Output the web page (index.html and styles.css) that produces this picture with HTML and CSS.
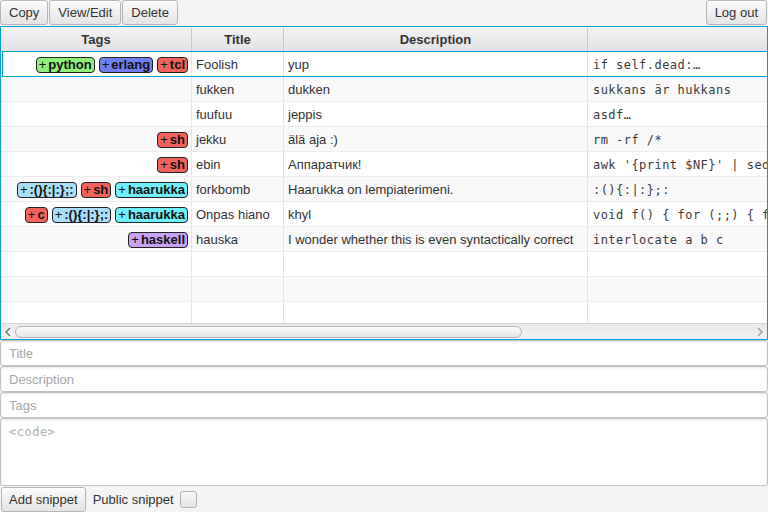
FILE: index.html
```html
<!DOCTYPE html>
<html>
<head>
<meta charset="utf-8">
<link rel="stylesheet" href="styles.css">
</head>
<body>
<div class="toolbar">
  <button class="btn">Copy</button>
  <button class="btn">View/Edit</button>
  <button class="btn">Delete</button>
  <div class="spacer"></div>
  <button class="btn">Log out</button>
</div>
<div class="table">
  <div class="viewport">
    <div class="grid">
      <div class="hrow">
        <div class="hc c1">Tags</div>
        <div class="hc c2">Title</div>
        <div class="hc c3">Description</div>
        <div class="hc c4"></div>
      </div>
      <div class="row sel">
        <div class="cell c1 tags"><span class="tag g">+<b>python</b></span><span class="tag bl">+<b>erlang</b></span><span class="tag r">+<b>tcl</b></span></div>
        <div class="cell c2">Foolish</div>
        <div class="cell c3">yup</div>
        <div class="cell c4 code">if self.dead:…</div>
      </div>
      <div class="row alt">
        <div class="cell c1 tags"></div>
        <div class="cell c2">fukken</div>
        <div class="cell c3">dukken</div>
        <div class="cell c4 code">sukkans är hukkans</div>
      </div>
      <div class="row">
        <div class="cell c1 tags"></div>
        <div class="cell c2">fuufuu</div>
        <div class="cell c3">jeppis</div>
        <div class="cell c4 code">asdf…</div>
      </div>
      <div class="row alt">
        <div class="cell c1 tags"><span class="tag r">+<b>sh</b></span></div>
        <div class="cell c2">jekku</div>
        <div class="cell c3">älä aja :)</div>
        <div class="cell c4 code">rm -rf /*</div>
      </div>
      <div class="row">
        <div class="cell c1 tags"><span class="tag r">+<b>sh</b></span></div>
        <div class="cell c2">ebin</div>
        <div class="cell c3">Аппаратчик!</div>
        <div class="cell c4 code">awk '{print $NF}' | sed 's/x/y/'</div>
      </div>
      <div class="row alt">
        <div class="cell c1 tags"><span class="tag lb">+<b>:(){:|:};:</b></span><span class="tag r">+<b>sh</b></span><span class="tag cy">+<b>haarukka</b></span></div>
        <div class="cell c2">forkbomb</div>
        <div class="cell c3">Haarukka on lempiaterimeni.</div>
        <div class="cell c4 code">:(){:|:};:</div>
      </div>
      <div class="row">
        <div class="cell c1 tags"><span class="tag r">+<b>c</b></span><span class="tag lb">+<b>:(){:|:};:</b></span><span class="tag cy">+<b>haarukka</b></span></div>
        <div class="cell c2">Onpas hiano</div>
        <div class="cell c3">khyl</div>
        <div class="cell c4 code">void f() { for (;;) { fork(); } }</div>
      </div>
      <div class="row alt">
        <div class="cell c1 tags"><span class="tag li">+<b>haskell</b></span></div>
        <div class="cell c2">hauska</div>
        <div class="cell c3">I wonder whether this is even syntactically correct</div>
        <div class="cell c4 code">interlocate a b c</div>
      </div>
      <div class="row">
        <div class="cell c1"></div><div class="cell c2"></div><div class="cell c3"></div><div class="cell c4"></div>
      </div>
      <div class="row alt">
        <div class="cell c1"></div><div class="cell c2"></div><div class="cell c3"></div><div class="cell c4"></div>
      </div>
      <div class="row">
        <div class="cell c1"></div><div class="cell c2"></div><div class="cell c3"></div><div class="cell c4"></div>
      </div>
    </div>
  </div>
  <div class="hscroll">
    <div class="arrow"><svg width="8" height="10" viewBox="0 0 8 10"><path d="M6 1 L2 5 L6 9" fill="none" stroke="#6e6e6e" stroke-width="1.3"/></svg></div>
    <div class="track"><div class="thumb"></div></div>
    <div class="arrow"><svg width="8" height="10" viewBox="0 0 8 10"><path d="M2 1 L6 5 L2 9" fill="none" stroke="#9a9a9a" stroke-width="1.3"/></svg></div>
  </div>
</div>
<div class="form">
  <div class="field">Title</div>
  <div class="field">Description</div>
  <div class="field">Tags</div>
  <div class="area">&lt;code&gt;</div>
</div>
<div class="bottom">
  <button class="btn add">Add snippet</button>
  <span class="lbl">Public snippet</span>
  <span class="check"></span>
</div>
</body>
</html>
```
FILE: styles.css
```css
* { box-sizing: border-box; }
html, body { margin: 0; padding: 0; }
body {
  width: 768px;
  height: 512px;
  overflow: hidden;
  background: #f4f4f4;
  font-family: "Liberation Sans", Arial, sans-serif;
  font-size: 13px;
  color: #333;
}
.toolbar {
  display: flex;
  height: 26px;
  gap: 1px;
  padding-right: 1px;
}
.spacer { flex: 1; }
.btn {
  height: 25px;
  padding: 0 8px;
  font-family: "Liberation Sans", Arial, sans-serif;
  font-size: 13px;
  color: #333;
  border: 1px solid #b5b5b5;
  border-radius: 3px;
  background: linear-gradient(#fbfbfb, #e4e4e4);
  box-shadow: inset 0 1px 0 #ffffff;
}
.table {
  height: 314px;
  border: 1px solid #039ed3;
  display: flex;
  flex-direction: column;
  background: #fff;
}
.viewport {
  flex: 1;
  overflow: hidden;
}
.grid { width: 1120px; }
.hrow {
  display: flex;
  height: 25px;
  padding-top: 1px;
  background: linear-gradient(#f3f3f3, #e2e2e2);
  border-bottom: 1px solid #c4c4c4;
}
.hc {
  display: flex;
  align-items: center;
  justify-content: center;
  font-weight: bold;
  color: #333;
  border-right: 1px solid #c8c8c8;
}
.c1 { width: 191px; flex: none; }
.c2 { width: 92px; flex: none; }
.c3 { width: 304px; flex: none; }
.c4 { width: 533px; flex: none; }
.row {
  display: flex;
  height: 25px;
  background: #fff;
  border-bottom: 1px solid #ececec;
  position: relative;
}
.row.alt { background: #f9f9f9; }
.row.sel::after {
  content: "";
  position: absolute;
  left: 1px; right: 0; top: -1px; bottom: -1px;
  border: 1px solid #039ed3;
  pointer-events: none;
}
.cell {
  display: flex;
  align-items: center;
  padding-left: 4px;
  padding-top: 1px;
  border-right: 1px solid #e4e4e4;
  white-space: nowrap;
  overflow: hidden;
}
.cell.code {
  padding-left: 5px;
  font-family: "DejaVu Sans Mono", monospace;
  font-size: 12px;
  letter-spacing: 0.46px;
  color: #3a3a3a;
}
.tags {
  justify-content: flex-end;
  gap: 4px;
  padding-right: 3px;
}
.tag {
  display: inline-flex;
  align-items: center;
  height: 16px;
  padding: 0 2px;
  border: 1px solid #222;
  border-radius: 4px;
  color: #111;
  font-size: 13px;
  line-height: 14px;
}
.tag b { margin-left: 2px; }
.g { background: #8ef27a; }
.bl { background: #6f7ff2; }
.r { background: #f3635c; }
.lb { background: #a9def8; }
.cy { background: #6ff0fb; }
.li { background: #c9a2f7; }
.hscroll {
  height: 16px;
  display: flex;
  align-items: center;
  background: linear-gradient(#e9e9e9, #f2f2f2);
  border-top: 1px solid #d2d2d2;
}
.arrow {
  width: 14px;
  height: 16px;
  display: flex;
  align-items: center;
  justify-content: center;
  flex: none;
}
.track {
  flex: 1;
  height: 14px;
  display: flex;
  align-items: center;
}
.thumb {
  width: 507px;
  height: 12px;
  border: 1px solid #b2b2b2;
  border-radius: 6px;
  background: linear-gradient(#fbfbfb, #e5e5e5);
}
.form {
  display: flex;
  flex-direction: column;
}
.field, .area {
  background: #fff;
  border: 1px solid #c2c2c2;
  border-radius: 3px;
  box-shadow: inset 0 1px 2px #e4e4e4;
  color: #a6a6a6;
}
.field {
  height: 26px;
  padding: 0 8px;
  display: flex;
  align-items: center;
}
.area {
  height: 68px;
  padding: 6px 8px;
  font-family: "DejaVu Sans Mono", monospace;
  font-size: 12px;
  letter-spacing: 0.5px;
  color: #b0b0b0;
}
.bottom {
  display: flex;
  align-items: center;
  height: 26px;
  padding: 0 1px;
}
.add { height: 25px; padding: 0 7px; }
.lbl { margin-left: 7px; }
.check {
  width: 17px;
  height: 17px;
  margin-left: 6px;
  border: 1px solid #b0b0b0;
  border-radius: 3px;
  background: linear-gradient(#f8f8f8, #e4e4e4);
}
```
